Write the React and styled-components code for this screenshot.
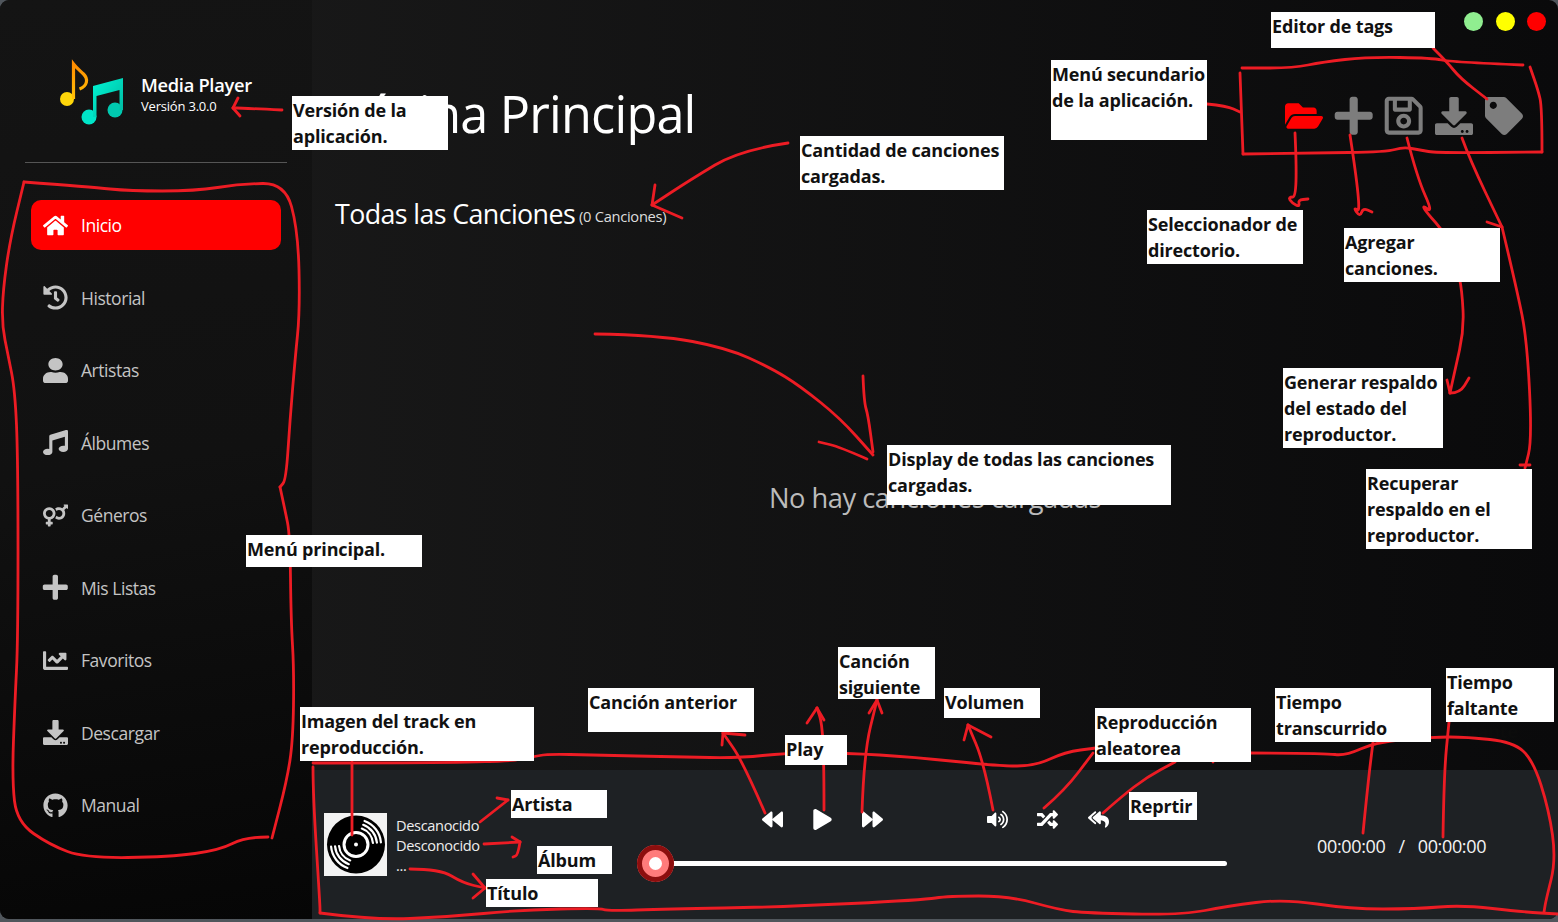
import React from "react";
import styled, { createGlobalStyle } from "styled-components";
import {
  FaHome,
  FaHistory,
  FaUser,
  FaMusic,
  FaVenusMars,
  FaPlus,
  FaChartLine,
  FaDownload,
  FaGithub,
  FaFolderOpen,
  FaRegSave,
  FaTag,
  FaBackward,
  FaPlay,
  FaForward,
  FaVolumeUp,
  FaRandom,
  FaReplyAll,
} from "react-icons/fa";

const GlobalStyle = createGlobalStyle`
  html, body { margin: 0; padding: 0; background: #50565c; }
  body { font-family: "Open Sans", "Noto Sans", sans-serif; }
`;

const menuItems = [
  { label: "Inicio", icon: FaHome },
  { label: "Historial", icon: FaHistory },
  // the person icon is a bit squat in the app, so it is stretched to a square
  { label: "Artistas", icon: FaUser, iconProps: { preserveAspectRatio: "none" } },
  { label: "Álbumes", icon: FaMusic },
  { label: "Géneros", icon: FaVenusMars },
  { label: "Mis Listas", icon: FaPlus, iconProps: { size: 28.6 } },
  { label: "Favoritos", icon: FaChartLine },
  { label: "Descargar", icon: FaDownload },
  { label: "Manual", icon: FaGithub },
];

const notes = [
  { x: 292, y: 96, w: 156, h: 54, text: "Versión de la\naplicación." },
  { x: 800, y: 136, w: 204, h: 54, text: "Cantidad de canciones\ncargadas." },
  { x: 1271, y: 12, w: 164, h: 36, text: "Editor de tags" },
  { x: 1051, y: 60, w: 156, h: 80, text: "Menú secundario\nde la aplicación." },
  { x: 1147, y: 210, w: 156, h: 54, text: "Seleccionador de\ndirectorio." },
  { x: 1344, y: 228, w: 156, h: 54, text: "Agregar\ncanciones." },
  { x: 1283, y: 368, w: 160, h: 80, text: "Generar respaldo\ndel estado del\nreproductor." },
  { x: 1366, y: 469, w: 166, h: 80, text: "Recuperar\nrespaldo en el\nreproductor." },
  { x: 887, y: 445, w: 284, h: 60, text: "Display de todas las canciones\ncargadas." },
  { x: 246, y: 535, w: 176, h: 32, text: "Menú principal." },
  { x: 300, y: 707, w: 234, h: 54, text: "Imagen del track en\nreproducción." },
  { x: 588, y: 688, w: 166, h: 44, text: "Canción anterior" },
  { x: 785, y: 735, w: 62, h: 30, text: "Play" },
  { x: 838, y: 647, w: 97, h: 52, text: "Canción\nsiguiente" },
  { x: 944, y: 688, w: 96, h: 30, text: "Volumen" },
  { x: 1095, y: 708, w: 156, h: 54, text: "Reproducción\naleatorea" },
  { x: 1275, y: 688, w: 156, h: 54, text: "Tiempo\ntranscurrido" },
  { x: 1446, y: 668, w: 108, h: 54, text: "Tiempo\nfaltante" },
  { x: 1129, y: 792, w: 68, h: 28, text: "Reprtir" },
  { x: 511, y: 790, w: 96, h: 28, text: "Artista" },
  { x: 537, y: 846, w: 75, h: 28, text: "Álbum" },
  { x: 486, y: 879, w: 112, h: 28, text: "Título" },
];

// hand drawn red marks over the screenshot
const strokes = [
  "24,182 90,187 130,191 195,191 240,184 285,183 298,230 300,310 295,360 290,420 286,480 280,487",
  "280,487 285,510 290,535 291,620 294,670 293,740 287,780 272,838",
  "268,837 245,837 220,850 170,857 85,858 50,845 17,822 12,780 15,700 18,640 18,460 15,390 8,355 2,325 3,290 10,240 24,182",
  "1240,73 1242,127 1243,154",
  "1243,154 1310,153 1387,152 1403,147 1420,150 1437,153 1542,152",
  "1542,152 1542,107 1538,90 1530,67",
  "1523,65 1450,62 1433,58 1367,57 1323,62 1293,68 1242,68",
  "1207,104 1227,106 1240,112",
  "1433,48 1447,62 1460,78 1487,99",
  "1295,133 1298,197 1288,197 1292,203 1300,207 1298,200 1308,199",
  "1350,135 1362,213 1353,207 1360,217 1363,208 1372,212",
  "1407,138 1417,177 1433,213 1422,205 1427,213 1445,233 1457,267 1462,290 1464,330 1455,370 1450,393",
  "1450,393 1447,380",
  "1450,393 1460,393 1469,378",
  "1462,138 1470,160 1502,227",
  "1502,227 1487,222",
  "1502,227 1517,290 1527,340 1532,440 1525,468",
  "1520,465 1530,465",
  "788,143 740,150 690,180 652,205",
  "652,205 655,185",
  "652,205 682,218",
  "282,110 240,108 233,108",
  "233,108 238,98",
  "233,108 240,116",
  "595,334 658,335 727,348 771,368 800,386 840,418 873,455",
  "863,376 864,402 868,415 873,452",
  "867,459 840,447 819,442",
  "313,767 313,795 320,905 320,913",
  "320,913 373,920 447,917 520,910 600,908 607,911 667,909 780,907 923,900 948,896 1009,896 1060,910 1086,913 1182,915 1228,906 1284,899 1350,909 1416,909 1462,905 1523,912 1558,914",
  "313,763 497,763 533,757 547,754 593,755 680,757 740,758 785,753 846,753 913,757 999,766 1035,766 1065,752 1096,748",
  "1251,753 1325,753 1345,756 1376,742 1432,737 1467,737 1513,742 1533,760 1549,810 1556,860 1546,900 1544,912",
  "1213,755 1213,762",
  "765,813 743,762 723,733",
  "723,733 745,735",
  "723,733 722,745",
  "824,810 824,763 822,723 817,708",
  "817,708 807,723",
  "817,708 824,720",
  "862,812 864,753 877,700",
  "877,700 869,713",
  "877,700 882,713",
  "993,810 984,763 968,725",
  "968,725 964,740",
  "968,725 991,737",
  "1044,808 1065,790 1093,753",
  "1103,813 1121,797 1147,777 1175,762",
  "1363,833 1368,783 1373,742",
  "1443,837 1444,773 1449,722",
  "352,762 352,835",
  "480,822 508,800",
  "508,800 497,798",
  "484,844 520,842",
  "520,842 512,837",
  "520,842 518,855 513,857",
  "410,869 440,869 463,883 485,888",
  "485,888 473,898",
  "473,874 485,888",
];

// rounds the corners of a stroke so that it looks drawn with a mouse
function smooth(points) {
  const pts = points.split(" ").map((p) => p.split(",").map(Number));
  let d = `M${pts[0][0]} ${pts[0][1]}`;
  for (let i = 1; i < pts.length - 1; i++) {
    const mx = (pts[i][0] + pts[i + 1][0]) / 2;
    const my = (pts[i][1] + pts[i + 1][1]) / 2;
    d += `Q${pts[i][0]} ${pts[i][1]} ${mx} ${my}`;
  }
  const last = pts[pts.length - 1];
  return `${d}L${last[0]} ${last[1]}`;
}

const Page = styled.div`
  position: relative;
  width: 1558px;
  height: 922px;
  overflow: hidden;
`;

const Frame = styled.div`
  display: flex;
  height: 919px;
  border-radius: 9px;
  overflow: hidden;
  background: linear-gradient(90deg, #1b1b1b 0%, #0a0a0b 100%);
`;

const Sidebar = styled.aside`
  width: 312px;
  flex-shrink: 0;
  display: flex;
  flex-direction: column;
  background: linear-gradient(172deg, #141414 0%, #111111 50%, #060606 100%);
`;

const Brand = styled.div`
  display: flex;
  align-items: center;
  gap: 15px;
  height: 162px;
  box-sizing: border-box;
  padding: 24px 0 0 58px;
`;

const BrandText = styled.div`
  color: #fff;
  margin-top: 2px;
`;

const BrandName = styled.div`
  font-size: 18.3px;
  font-weight: 600;
  line-height: 24px;
  letter-spacing: -0.3px;
`;

const BrandVersion = styled.div`
  font-size: 13px;
  line-height: 18px;
  letter-spacing: -0.2px;
`;

const Divider = styled.hr`
  margin: 0 25px;
  border: 0;
  border-top: 1px solid #555;
`;

const Menu = styled.nav`
  display: flex;
  flex-direction: column;
  gap: 22.5px;
  padding: 37px 31px 0;
`;

const MenuItem = styled.a`
  display: flex;
  align-items: center;
  gap: 13px;
  height: 50px;
  padding-left: 12px;
  border-radius: 10px;
  font-size: 17.5px;
  letter-spacing: -0.45px;
  color: ${(p) => (p.$active ? "#fff" : "#c4c4c4")};
  background: ${(p) => (p.$active ? "#ff0000" : "transparent")};
`;

const MenuIcon = styled.span`
  display: flex;
  width: 25px;
  justify-content: center;
  align-items: center;
  font-size: 25px;

  svg {
    flex-shrink: 0;
  }
`;

const Main = styled.main`
  flex: 1;
  min-width: 0;
  display: flex;
  flex-direction: column;
`;

const Content = styled.div`
  flex: 1;
  display: flex;
  flex-direction: column;
  padding: 12px 12px 0 23px;
`;

const WindowButtons = styled.div`
  display: flex;
  justify-content: flex-end;
  gap: 12.5px;
`;

const Light = styled.span`
  width: 19px;
  height: 19px;
  border-radius: 50%;
  background: ${(p) => p.$color};
`;

const Header = styled.header`
  display: flex;
  align-items: center;
  justify-content: space-between;
  height: 104px;
  margin-top: 30px;
  padding-right: 23px;
`;

const Title = styled.h1`
  margin: 0;
  font-size: 50.4px;
  font-weight: 500;
  letter-spacing: -0.8px;
  color: #fff;
`;

const Toolbar = styled.div`
  display: flex;
  gap: 12px;
  padding-top: 6px;
`;

const ToolButton = styled.span`
  display: flex;
  width: 38px;
  height: 38px;
  justify-content: center;
  align-items: center;
  font-size: 38px;
  color: ${(p) => (p.$active ? "#ff0000" : "#7d7d7d")};

  svg {
    flex-shrink: 0;
  }
`;

const Section = styled.div`
  display: flex;
  align-items: center;
  gap: 4px;
  margin-top: 31px;
  color: #fff;
`;

const SectionTitle = styled.h2`
  margin: 0;
  font-size: 26.8px;
  font-weight: 400;
  letter-spacing: -0.6px;
  line-height: 36px;
`;

const SectionCount = styled.span`
  padding-top: 3px;
  font-size: 14.7px;
  letter-spacing: -0.3px;
  color: #ddd;
`;

const Empty = styled.div`
  flex: 1;
  display: flex;
  align-items: center;
  justify-content: center;
  padding: 0 11px 8px 0;
  font-size: 27.3px;
  letter-spacing: -0.5px;
  color: #bbb;
`;

const Player = styled.footer`
  height: 149px;
  box-sizing: border-box;
  flex-shrink: 0;
  display: flex;
  padding: 43px 0 0 12px;
  background: #1e2124;
`;

const Track = styled.div`
  width: 313px;
  flex-shrink: 0;
  display: flex;
  gap: 9px;
`;

const Cover = styled.div`
  width: 63px;
  height: 63px;
  background: #f3f3f3;
`;

const TrackText = styled.div`
  display: flex;
  flex-direction: column;
  padding-top: 2px;
  font-size: 14.6px;
  line-height: 20px;
  letter-spacing: -0.35px;
  color: #eee;
`;

const Center = styled.div`
  width: 590px;
  flex-shrink: 0;
`;

const Controls = styled.div`
  display: flex;
  align-items: center;
  height: 14px;
  margin-top: -1px;
  padding-left: 125px;
`;

const ControlIcon = styled.span`
  display: flex;
  justify-content: center;
  width: ${(p) => p.$size}px;
  margin-right: ${(p) => p.$after}px;
  font-size: ${(p) => p.$size}px;
  color: #fff;
`;

const Slider = styled.div`
  position: relative;
  height: 5px;
  margin: 35px 0 0 18px;
  border-radius: 3px;
  background: #fff;
`;

const Knob = styled.span`
  position: absolute;
  left: -18px;
  top: -16px;
  width: 37px;
  height: 37px;
  box-sizing: border-box;
  border-radius: 50%;
  background: #fff;
  border: 12px solid #ff7b7b;

  &::before {
    content: "";
    position: absolute;
    inset: -12px;
    border-radius: 50%;
    border: 5px solid #8c0e0e;
  }
`;

const Times = styled.div`
  display: flex;
  gap: 13px;
  margin: 21px 0 0 90px;
  font-size: 18px;
  letter-spacing: -0.35px;
  color: #f4f4f4;
  line-height: 24px;
`;

const Ink = styled.svg`
  position: absolute;
  inset: 0;
  pointer-events: none;
`;

const Note = styled.div`
  position: absolute;
  left: ${(p) => p.$x}px;
  top: ${(p) => p.$y}px;
  width: ${(p) => p.$w}px;
  height: ${(p) => p.$h}px;
  background: #fff;
  color: #111;
  font-size: 18px;
  font-weight: 700;
  line-height: 26px;
  letter-spacing: -0.17px;
  padding: 1px 0 0 1px;
  box-sizing: border-box;
  white-space: pre;
  overflow: hidden;
`;

const GhostText = styled.div`
  position: absolute;
  left: 1447px;
  top: 718px;
  font-size: 18px;
  font-weight: 700;
  line-height: 26px;
  letter-spacing: -0.17px;
  color: #0c0c0c;
`;

function Logo() {
  return (
    <svg width="68" height="68" viewBox="0 0 68 68">
      <defs>
        <linearGradient id="noteOne" x1="0" y1="1" x2="0" y2="0">
          <stop offset="0" stopColor="#ffc107" />
          <stop offset="1" stopColor="#ff8c00" />
        </linearGradient>
        <linearGradient id="noteTwo" x1="0" y1="0" x2="1" y2="1">
          <stop offset="0" stopColor="#00f5d4" />
          <stop offset="1" stopColor="#00b8a0" />
        </linearGradient>
      </defs>
      <circle cx="9" cy="40" r="7" fill="#ffd60a" />
      <path
        d="M15.500 40V5c3 4 7 7 10 10 5 5 4 12-4 15"
        fill="none"
        stroke="url(#noteOne)"
        strokeWidth="3.200"
      />
      <circle cx="31" cy="58" r="7.500" fill="#00e5c8" />
      <circle cx="57" cy="51" r="7.500" fill="#00c9b0" />
      <path
        d="M35 27l30-8v32h-3.500V31L38.500 37v21H35z"
        fill="url(#noteTwo)"
      />
    </svg>
  );
}

// one arc of the vinyl grooves
function groove(radius, from, to) {
  const rad = (a) => (a * Math.PI) / 180;
  const x1 = 32 + radius * Math.cos(rad(from));
  const y1 = 31.5 + radius * Math.sin(rad(from));
  const x2 = 32 + radius * Math.cos(rad(to));
  const y2 = 31.5 + radius * Math.sin(rad(to));
  return `M${x1} ${y1}A${radius} ${radius} 0 0 1 ${x2} ${y2}`;
}

function Vinyl() {
  return (
    <svg width="63" height="63" viewBox="0 0 63 63">
      <circle cx="32" cy="31.5" r="29" fill="#000" />
      <circle cx="32" cy="31.5" r="12" fill="none" stroke="#fff" strokeWidth="3" />
      <circle cx="32" cy="31.5" r="2" fill="#fff" />
      {[17, 21, 25].map((r) => (
        <g key={r} fill="none" stroke="#fff" strokeWidth="2.2" strokeLinecap="round">
          <path d={groove(r, -70, -5)} />
          <path d={groove(r, 110, 175)} />
        </g>
      ))}
    </svg>
  );
}

export default function App() {
  return (
    <Page>
      <GlobalStyle />
      <Frame>
        <Sidebar>
          <Brand>
            <Logo />
            <BrandText>
              <BrandName>Media Player</BrandName>
              <BrandVersion>Versión 3.0.0</BrandVersion>
            </BrandText>
          </Brand>
          <Divider />
          <Menu>
            {menuItems.map((item) => (
              <MenuItem key={item.label} $active={item.label === "Inicio"}>
                <MenuIcon>
                  <item.icon {...item.iconProps} />
                </MenuIcon>
                {item.label}
              </MenuItem>
            ))}
          </Menu>
        </Sidebar>
        <Main>
          <Content>
            <WindowButtons>
              <Light $color="#90ee90" />
              <Light $color="#ffff00" />
              <Light $color="#ff0000" />
            </WindowButtons>
            <Header>
              <Title>Página Principal</Title>
              <Toolbar>
                <ToolButton $active>
                  <FaFolderOpen />
                </ToolButton>
                <ToolButton>
                  <FaPlus size={43.4} />
                </ToolButton>
                <ToolButton>
                  <FaRegSave size={43.4} />
                </ToolButton>
                <ToolButton>
                  <FaDownload />
                </ToolButton>
                <ToolButton>
                  <FaTag />
                </ToolButton>
              </Toolbar>
            </Header>
            <Section>
              <SectionTitle>Todas las Canciones</SectionTitle>
              <SectionCount>(0 Canciones)</SectionCount>
            </Section>
            <Empty>No hay canciones cargadas</Empty>
          </Content>
          <Player>
            <Track>
              <Cover>
                <Vinyl />
              </Cover>
              <TrackText>
                <span>Descanocido</span>
                <span>Desconocido</span>
                <span>...</span>
              </TrackText>
            </Track>
            <Center>
              <Controls>
                <ControlIcon $size={21} $after={29}>
                  <FaBackward />
                </ControlIcon>
                <ControlIcon $size={21} $after={29}>
                  <FaPlay />
                </ControlIcon>
                <ControlIcon $size={21} $after={104}>
                  <FaForward />
                </ControlIcon>
                <ControlIcon $size={21} $after={29}>
                  <FaVolumeUp />
                </ControlIcon>
                <ControlIcon $size={21} $after={30}>
                  <FaRandom />
                </ControlIcon>
                <ControlIcon $size={21} $after={0}>
                  <FaReplyAll />
                </ControlIcon>
              </Controls>
              <Slider>
                <Knob />
              </Slider>
            </Center>
            <Times>
              <span>00:00:00</span>
              <span>/</span>
              <span>00:00:00</span>
            </Times>
          </Player>
        </Main>
      </Frame>

      <GhostText>faltante</GhostText>
      <Ink width="1558" height="922" viewBox="0 0 1558 922">
        {strokes.map((points) => (
          <path
            key={points}
            d={smooth(points)}
            fill="none"
            stroke="#ed1c24"
            strokeWidth="2.8"
            strokeLinejoin="round"
            strokeLinecap="round"
          />
        ))}
      </Ink>
      {notes.map((note) => (
        <Note key={note.text} $x={note.x} $y={note.y} $w={note.w} $h={note.h}>
          {note.text}
        </Note>
      ))}
    </Page>
  );
}
